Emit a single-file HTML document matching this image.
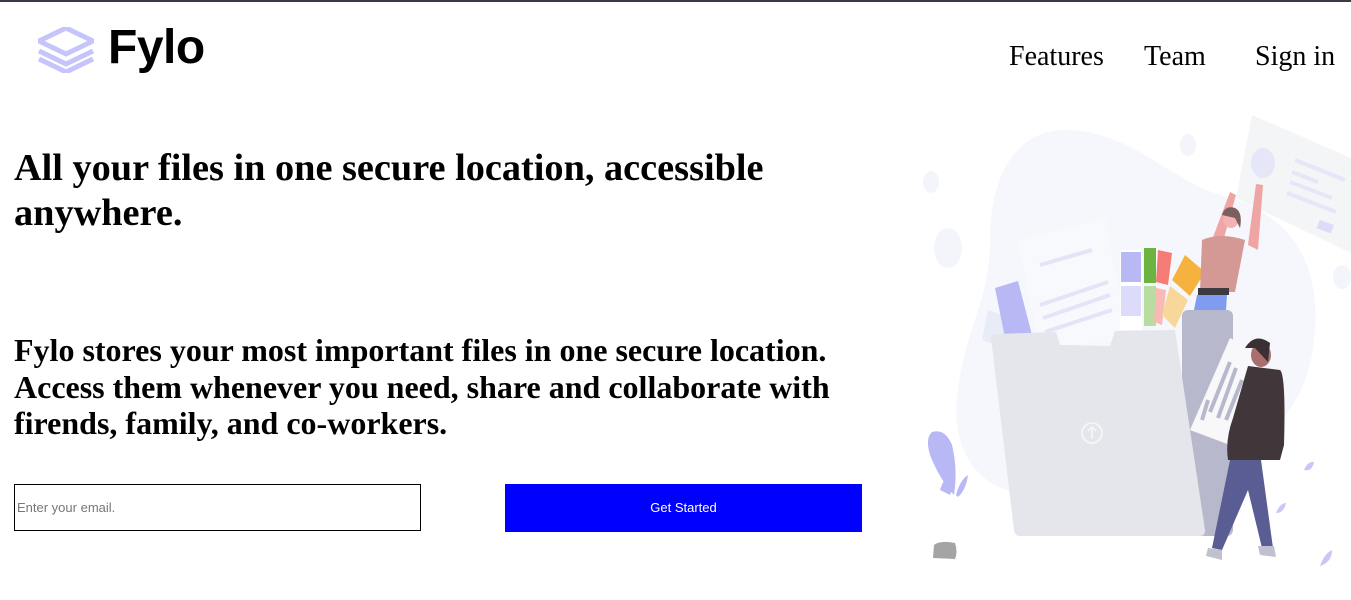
<!DOCTYPE html>
<html><head><meta charset="utf-8"><style>
html,body{margin:0;padding:0;background:#fff;width:1351px;height:600px;overflow:hidden;position:relative;font-family:"Liberation Serif",serif}
.top{position:absolute;left:0;top:0;width:1351px;height:2px;background:#3a3a44}
.logo{position:absolute;left:38px;top:27px}
.brand{position:absolute;left:108px;top:20px;font-family:"Liberation Sans",sans-serif;font-weight:bold;font-size:48px;letter-spacing:-0.5px;color:#000;line-height:56px}
.nav{position:absolute;top:41px;font-size:28px;color:#000;line-height:32px}
h1{position:absolute;left:14px;top:146px;margin:0;font-size:38.3px;line-height:45px;font-weight:bold;width:800px}
p{position:absolute;left:14px;top:332px;margin:0;font-size:32px;line-height:36.5px;font-weight:bold;width:835px}
.inp{position:absolute;left:14px;top:484px;width:405px;height:45px;border:1px solid #000;font-family:"Liberation Sans",sans-serif;font-size:13px;color:#777;line-height:45px;box-sizing:content-box}
.inp span{padding-left:2px}
.btn{position:absolute;left:505px;top:484px;width:357px;height:48px;background:#0000ff;color:#fff;font-family:"Liberation Sans",sans-serif;font-size:13px;line-height:48px;text-align:center}
svg.ill{position:absolute;left:900px;top:100px}
</style></head><body>
<div class="top"></div>
<svg class="logo" width="56" height="46" viewBox="0 0 56 46">
<polygon points="28,1 55,14 28,27 1,14" fill="none" stroke="#c5c5fb" stroke-width="5"/>
<polyline points="1,24 28,37 55,24" fill="none" stroke="#c5c5fb" stroke-width="5"/>
<polyline points="1,32 28,45 55,32" fill="none" stroke="#c5c5fb" stroke-width="5"/>
</svg>
<div class="brand">Fylo</div>
<div class="nav" style="left:1009px">Features</div>
<div class="nav" style="left:1144px">Team</div>
<div class="nav" style="left:1255px">Sign in</div>
<h1>All your files in one secure location, accessible anywhere.</h1>
<p>Fylo stores your most important files in one secure location. Access them whenever you need, share and collaborate with firends, family, and co-workers.</p>
<div class="inp"><span>Enter your email.</span></div>
<div class="btn">Get Started</div>
<svg class="ill" width="451" height="500" viewBox="0 0 451 500">
<path d="M165,30 C230,30 270,80 320,95 C380,110 420,150 415,230 C410,300 380,330 330,360 C270,395 200,400 130,395 C70,390 50,340 58,290 C65,230 90,200 90,140 C90,70 120,30 165,30Z" fill="#f6f7fc"/>
<ellipse cx="31" cy="82" rx="8" ry="11" fill="#f4f5fb"/>
<ellipse cx="48" cy="148" rx="14" ry="20" fill="#f4f5fb"/>
<ellipse cx="288" cy="45" rx="8" ry="11" fill="#f4f5fb"/>
<ellipse cx="442" cy="177" rx="9" ry="12" fill="#f4f5fb"/>
<ellipse cx="250" cy="555" rx="90" ry="15" fill="#f6f7fc"/>
<polygon points="88,210 120,222 110,250 82,240" fill="#e8ecf7"/>
<polygon points="95,188 118,181 132,235 105,238" fill="#b8b8f4"/>
<polygon points="118,140 205,118 228,238 140,250" fill="#f8f9fc"/>
<path d="M140,165 L192,150 M140,205 L208,182 M143,218 L210,195 M145,232 L212,210" stroke="#e4e4f8" stroke-width="4"/>
<rect x="220" y="150" width="22" height="80" fill="#fff"/>
<rect x="221" y="152" width="20" height="30" fill="#b8b8f4"/><rect x="221" y="186" width="20" height="30" fill="#dcdcfa"/>
<rect x="244" y="148" width="12" height="35" fill="#6db33f"/><rect x="244" y="186" width="12" height="40" fill="#b9dda0"/>
<polygon points="258,150 272,153 268,185 256,182" fill="#f47c75"/><polygon points="256,188 266,190 262,225 254,222" fill="#f9bab5"/>
<polygon points="285,155 305,172 290,196 272,180" fill="#f6b23e"/><polygon points="270,186 288,200 275,228 262,215" fill="#f7d89a"/>
<rect x="282" y="210" width="51" height="226" rx="6" fill="#b8b8cc"/>
<path d="M91,238 Q91,234 96,234 L156,232 L160,245 L210,246 L215,231 L275,230 L305,430 Q305,436 300,436 L120,436 Q115,436 114,430 Z" fill="#e5e6ec"/>
<circle cx="192" cy="333" r="10" fill="none" stroke="#f8f8fb" stroke-width="1.5"/>
<path d="M192,339 L192,327 M188,331 L192,327 L196,331" stroke="#f8f8fb" stroke-width="1.5" fill="none"/>
<polygon points="352,15 451,58 451,153 336,98" fill="#f4f5f7"/>
<ellipse cx="363" cy="63" rx="12" ry="15" fill="#e5e6f7"/>
<path d="M395,60 L445,80 M392,72 L418,82 M390,82 L432,98 M387,93 L436,112" stroke="#e6e6f8" stroke-width="4"/>
<rect x="418" y="122" width="15" height="9" fill="#dcdcfa" transform="rotate(20 425 126)"/>
<path d="M312,140 L330,92 L336,95 L322,145 Z M348,145 L356,84 L363,85 L358,150 Z" fill="#f0a5a5"/>
<path d="M302,140 Q320,132 345,140 L335,192 L300,192 Z" fill="#d49994"/>
<rect x="298" y="188" width="31" height="7" fill="#3d3a40"/>
<path d="M297,195 L327,195 L326,210 L294,210 Z" fill="#7f9cf0"/>
<ellipse cx="331" cy="118" rx="8" ry="10" fill="#f3b3b0"/>
<path d="M322,115 Q325,105 335,108 Q343,112 340,128 L335,118 Z" fill="#7b5e5e"/>
<polygon points="330,238 352,250 330,345 290,330" fill="#f8f8fa"/>
<path d="M302,320 L308,300 M310,312 L330,262 M318,318 L336,268 M326,320 L342,280" stroke="#b8b8cc" stroke-width="4"/>
<path d="M348,266 L380,270 Q386,275 384,345 L380,360 L328,360 Q325,340 333,318 Z" fill="#41363a"/>
<path d="M330,360 L361,360 L373,448 L362,448 L348,390 L322,450 L312,448 Z" fill="#5a5c94"/>
<path d="M308,448 L322,450 L322,460 L306,456Z M358,446 L374,446 L376,457 L360,455Z" fill="#c0c0d0"/>
<ellipse cx="361" cy="255" rx="10" ry="12" fill="#a96f6f"/>
<path d="M345,248 Q355,232 370,243 L368,262 L355,248 Z" fill="#3a2f32"/>
<path d="M32,332 Q45,328 52,345 Q58,370 54,395 Q40,380 30,355 Q25,338 32,332Z" fill="#b8b8f4"/>
<path d="M40,390 Q45,375 52,372 Q55,385 50,395 Z M56,395 Q60,380 68,375 Q66,390 58,397Z" fill="#b8b8f4"/>
<path d="M34,445 Q40,440 55,443 Q58,452 55,459 L33,458 Z" fill="#a4a4a4"/>
<path d="M376,413 Q380,403 386,403 Q384,413 376,413Z M404,370 Q408,361 414,362 Q412,372 404,370Z M420,466 Q424,454 432,450 Q432,462 420,466Z" fill="#c7c7f8"/>
</svg>
</body></html>
